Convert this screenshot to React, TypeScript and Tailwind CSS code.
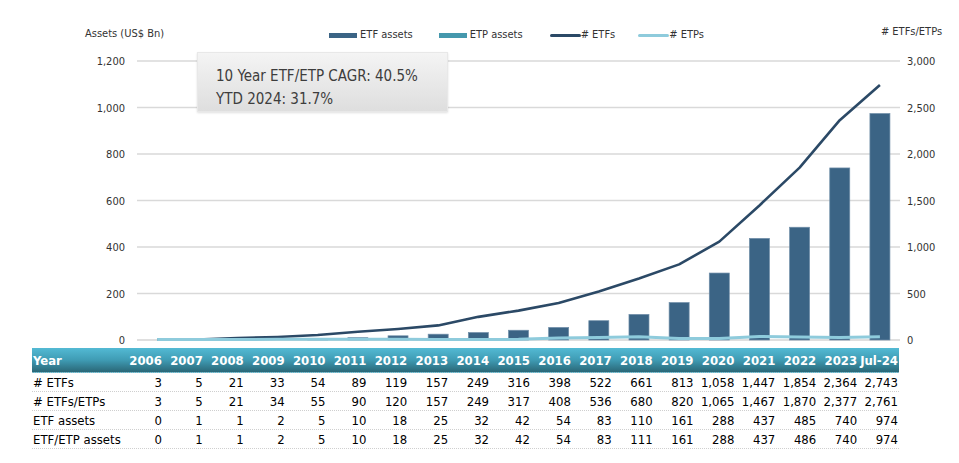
import React from 'react'

const years = ['2006', '2007', '2008', '2009', '2010', '2011', '2012', '2013', '2014', '2015', '2016', '2017', '2018', '2019', '2020', '2021', '2022', '2023', 'Jul-24']

const rows = [
  { label: '# ETFs', values: [3, 5, 21, 33, 54, 89, 119, 157, 249, 316, 398, 522, 661, 813, 1058, 1447, 1854, 2364, 2743] },
  { label: '# ETFs/ETPs', values: [3, 5, 21, 34, 55, 90, 120, 157, 249, 317, 408, 536, 680, 820, 1065, 1467, 1870, 2377, 2761] },
  { label: 'ETF assets', values: [0, 1, 1, 2, 5, 10, 18, 25, 32, 42, 54, 83, 110, 161, 288, 437, 485, 740, 974] },
  { label: 'ETF/ETP assets', values: [0, 1, 1, 2, 5, 10, 18, 25, 32, 42, 54, 83, 111, 161, 288, 437, 486, 740, 974] },
]

const fmt = (n: number) => n.toLocaleString('en-US')

// chart geometry (svg coords, svg top = page y 48)
const X0 = 137
const X1 = 900
const Y_ZERO = 292
const PLOT_H = 279
const step = (X1 - X0) / years.length
const cx = (i: number) => X0 + (i + 0.5) * step
const yLeft = (v: number) => Y_ZERO - (v / 1200) * PLOT_H
const yRight = (v: number) => Y_ZERO - (v / 3000) * PLOT_H

const etfAssets = rows[2].values
const etfCount = rows[0].values
const etpCount = rows[1].values.map((v, i) => (v - etfCount[i]) * 1.6)

function Chart() {
  const leftTicks = [0, 200, 400, 600, 800, 1000, 1200]
  const rightTicks = [0, 500, 1000, 1500, 2000, 2500, 3000]
  const etfLine = etfCount.map((v, i) => `${cx(i)},${yRight(v)}`).join(' ')
  const etpLine = etpCount.map((v, i) => `${cx(i)},${yRight(v) - 0.5}`).join(' ')
  return (
    <svg width="959" height="300" className="block">
      {leftTicks.map((t) => (
        <g key={t}>
          {t > 0 && <line x1={X0} x2={X1} y1={yLeft(t)} y2={yLeft(t)} stroke="#d9d9d9" strokeWidth="1.5" />}
          <text x="125" y={yLeft(t) + 4} textAnchor="end" fontSize="11" fill="#333">
            {fmt(t)}
          </text>
        </g>
      ))}
      {rightTicks.map((t) => (
        <text key={t} x="907" y={yRight(t) + 4} fontSize="11" fill="#333">
          {fmt(t)}
        </text>
      ))}
      <line x1={X0} x2={X1} y1={Y_ZERO} y2={Y_ZERO} stroke="#bfbfbf" strokeWidth="1.2" />
      {etfAssets.map((v, i) => {
        const h = (v / 1200) * PLOT_H
        if (h < 0.5) return null
        return (
          <rect key={i} x={cx(i) - 10} y={Y_ZERO - h} width="20" height={h} fill="#3b6485" stroke="#6f8ea8" strokeWidth="0.7" />
        )
      })}
      <polyline points={etfLine} fill="none" stroke="#2b4966" strokeWidth="2.6" strokeLinejoin="round" />
      <polyline points={etpLine} fill="none" stroke="#8ecbdc" strokeWidth="3" strokeLinejoin="round" />
    </svg>
  )
}

function Legend() {
  return (
    <div className="flex items-start h-[48px] text-[11px] text-[#333]">
      <span className="ml-[85px] mt-[26px]">Assets (US$ Bn)</span>
      <div className="ml-[165px] mt-[27px] flex items-center">
        <span className="w-[28px] h-[5px] bg-[#3b6485]" />
        <span className="ml-[3px]">ETF assets</span>
      </div>
      <div className="ml-[26px] mt-[27px] flex items-center">
        <span className="w-[28px] h-[5px] bg-[#4598ad]" />
        <span className="ml-[3px]">ETP assets</span>
      </div>
      <div className="ml-[27px] mt-[27px] flex items-center">
        <span className="w-[31px] h-[3px] rounded-full bg-[#2b4966]" />
        <span>#&nbsp;ETFs</span>
      </div>
      <div className="ml-[23px] mt-[27px] flex items-center">
        <span className="w-[31px] h-[3px] rounded-full bg-[#8ecbdc]" />
        <span>#&nbsp;ETPs</span>
      </div>
      <span className="ml-[177px] mt-[24px]">#&nbsp;ETFs/ETPs</span>
    </div>
  )
}

export default function App() {
  return (
    <div
      className="relative w-[959px] h-[463px] bg-white overflow-hidden"
      style={{ fontFamily: '"DejaVu Sans Condensed", "DejaVu Sans", sans-serif' }}
    >
      <Legend />
      <Chart />

      {/* CAGR callout over the plot */}
      <div className="absolute left-[197px] top-[52px] w-[251px] h-[60px] pl-[18px] pt-[12px] bg-linear-to-b from-[#f4f4f4] to-[#dedede] border border-[#e8e8e8] shadow-[0_1px_2px_rgba(0,0,0,0.12)] text-[15px] leading-[22.6px] text-[#3d3d3d]">
        <div>10 Year ETF/ETP CAGR: 40.5%</div>
        <div>YTD 2024: 31.7%</div>
      </div>

      <div className="ml-[32px] w-[867px] text-[13px] text-black">
        <div className="grid grid-cols-[90px_repeat(19,minmax(0,1fr))] h-[25px] bg-linear-to-b from-[#53bad4] via-[#3f9cb4] to-[#2a6777] border-b border-dotted border-[#9fb8bf] font-bold text-white">
          <div className="flex items-end pb-[2px] pl-[1px]">Year</div>
          {years.map((y) => (
            <div key={y} className="flex items-end justify-end pb-[2px] pr-[1px] whitespace-nowrap">
              {y}
            </div>
          ))}
        </div>
        {rows.map((r) => (
          <div key={r.label} className="grid grid-cols-[90px_repeat(19,minmax(0,1fr))] h-[19px] border-b border-dotted border-[#cfcfcf]">
            <div className="flex items-center pl-[1px] whitespace-nowrap">{r.label}</div>
            {r.values.map((v, i) => (
              <div key={i} className="flex items-center justify-end pr-[1px]">
                {fmt(v)}
              </div>
            ))}
          </div>
        ))}
      </div>
    </div>
  )
}
